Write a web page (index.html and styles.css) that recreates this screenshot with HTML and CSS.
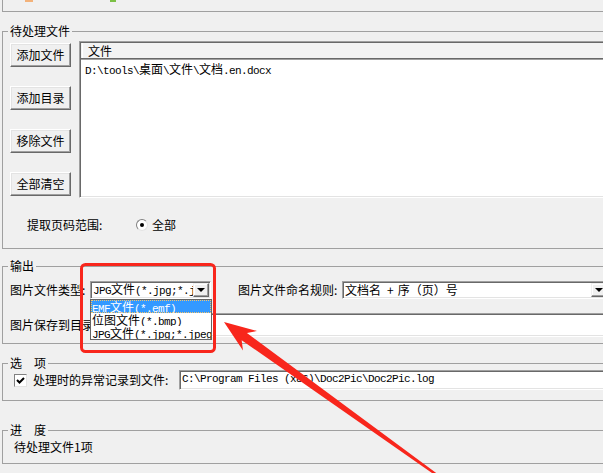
FILE: index.html
```html
<!DOCTYPE html>
<html lang="zh-CN">
<head>
    <meta charset="UTF-8">
    <meta name="viewport" content="width=device-width, initial-scale=1.0">
    <title>Doc2Pic</title>
    <link rel="stylesheet" href="styles.css">
</head>
<body>
    <div class="window">
        <div class="toolbar">
            <span class="tool-icon orange"></span>
            <span class="tool-icon green"></span>
        </div>

        <fieldset class="group group-files">
            <legend>待处理文件</legend>
            <div class="files-row">
                <div class="file-buttons">
                    <button class="btn">添加文件</button>
                    <button class="btn">添加目录</button>
                    <button class="btn">移除文件</button>
                    <button class="btn">全部清空</button>
                </div>
                <div class="file-list sunken">
                    <div class="list-header"><span class="header-cell">文件</span></div>
                    <div class="list-item mono">D:\tools\<span class="cjk">桌面</span>\<span class="cjk">文件</span>\<span class="cjk">文档</span>.en.docx</div>
                </div>
            </div>
            <div class="range-row">
                <span class="range-label">提取页码范围:</span>
                <span class="radio"><span class="radio-dot"></span></span>
                <span class="radio-text">全部</span>
            </div>
        </fieldset>

        <fieldset class="group group-output">
            <legend>输出</legend>
            <div class="output-row">
                <span class="label label-type">图片文件类型:</span>
                <div class="combo combo-type sunken">
                    <span class="combo-text mono">JPG<span class="cjk">文件</span>(*.jpg;*.jpeg)</span>
                    <span class="combo-btn"><span class="caret"></span></span>
                    <ul class="dropdown">
                        <li class="selected mono">EMF<span class="cjk">文件</span>(*.emf)</li>
                        <li class="mono"><span class="cjk">位图文件</span>(*.bmp)</li>
                        <li class="mono">JPG<span class="cjk">文件</span>(*.jpg;*.jpeg)</li>
                    </ul>
                </div>
                <span class="label label-name">图片文件命名规则:</span>
                <div class="combo combo-name sunken">
                    <span class="combo-text">文档名<span class="plus">+</span>序（页）号</span>
                    <span class="combo-btn"><span class="caret"></span></span>
                </div>
            </div>
            <div class="output-row dir-row">
                <span class="label label-dir">图片保存到目录:</span>
                <div class="textbox dir-box sunken"></div>
            </div>
        </fieldset>

        <fieldset class="group group-options">
            <legend>选<span class="legend-gap"></span>项</legend>
            <div class="options-row">
                <span class="checkbox">
                    <svg width="11" height="11" viewBox="0 0 11 11"><path d="M2 5 L4.5 7.5 L9 3" fill="none" stroke="#000" stroke-width="2"/></svg>
                </span>
                <span class="check-label">处理时的异常记录到文件:</span>
                <div class="textbox log-box sunken mono">C:\Program Files (x86)\Doc2Pic\Doc2Pic.log</div>
            </div>
        </fieldset>

        <fieldset class="group group-progress">
            <legend>进<span class="legend-gap"></span>度</legend>
            <div class="progress-text">待处理文件1项</div>
        </fieldset>

        <!-- annotation drawn on top of the screenshot -->
        <svg class="annotation" width="603" height="473" viewBox="0 0 603 473">
            <rect x="81.5" y="264.5" width="133" height="87" rx="4" fill="none" stroke="#f8261c" stroke-width="3"/>
            <polygon transform="translate(224 322) rotate(35.7)" fill="#f8261c"
                points="0,0 32,-12 25,-4.5 275,-1 275,1 25,4.5 32,12"/>
        </svg>
    </div>
</body>
</html>
```

FILE: styles.css
```css
* {
    box-sizing: border-box;
    margin: 0;
    padding: 0;
}

body {
    background: #f0f0f0;
    font-family: "Noto Sans CJK SC", sans-serif;
    font-size: 12px;
    line-height: 14px;
    color: #000;
    overflow: hidden;
}

.window {
    position: relative;
    width: 603px;
    height: 473px;
    overflow: hidden;
}

.mono {
    font-family: "Liberation Mono", "Noto Sans CJK SC", monospace;
    font-size: 11px;
    letter-spacing: -0.6px;
}

.cjk {
    font-family: "Noto Sans CJK SC", sans-serif;
    font-size: 12px;
    letter-spacing: 0;
}

.toolbar {
    display: flex;
    height: 12px;
    margin-left: 2px;
    border-left: 1px solid #a0a0a0;
    border-bottom: 1px solid #a0a0a0;
}

.tool-icon {
    height: 2px;
}

.tool-icon.orange {
    width: 8px;
    margin-left: 22px;
    background: #f3b27a;
}

.tool-icon.green {
    width: 6px;
    margin-left: 77px;
    background: #7cc046;
}

/* group boxes */
.group {
    border: 1px solid #a0a0a0;
    margin-left: 2px;
    margin-right: -20px;
    padding: 0 0 0 7px;
}

.group legend {
    margin-left: -2px;
    padding: 0 2px;
    line-height: 14px;
}

.legend-gap {
    display: inline-block;
    width: 12px;
}

.group-files {
    margin-top: 12px;
    height: 225px;
    padding-top: 3px;
}

.group-output {
    margin-top: 10px;
    height: 85px;
    padding-top: 8px;
}

.group-options {
    margin-top: 12px;
    height: 45px;
}

.group-progress {
    margin-top: 22px;
    height: 41px;
    padding-top: 3px;
}

.sunken {
    background: #fff;
    border: 1px solid;
    border-color: #a0a0a0 #fff #fff #a0a0a0;
    box-shadow: inset 1px 1px #696969, inset -1px -1px #e3e3e3;
}

/* file list */
.files-row {
    display: flex;
    gap: 8px;
    height: 157px;
}

.file-buttons {
    display: flex;
    flex-direction: column;
    justify-content: space-between;
    width: 61px;
    padding: 2px 0;
}

.btn {
    height: 24px;
    font: inherit;
    background: #f0f0f0;
    border: 1px solid;
    border-color: #fff #696969 #696969 #fff;
    box-shadow: inset -1px -1px #a0a0a0, inset 1px 1px #e3e3e3;
}

.file-list {
    flex: 1;
    padding: 1px 0 0 1px;
}

.list-header {
    height: 16px;
    background: #f3f3f3;
    border-bottom: 1px solid #696969;
    box-shadow: 0 1px #a0a0a0;
}

.header-cell {
    display: block;
    height: 15px;
    margin-left: 1px;
    padding-left: 5px;
    border-left: 1px solid #fff;
    line-height: 15px;
}

.list-item {
    margin-top: 2px;
    padding-left: 4px;
    line-height: 15px;
}

.range-row {
    display: flex;
    align-items: center;
    margin-top: 20px;
    padding-left: 17px;
}

.range-label {
    width: 109px;
}

.radio {
    display: flex;
    align-items: center;
    justify-content: center;
    width: 12px;
    height: 12px;
    border-radius: 50%;
    border: 1px solid;
    border-color: #808080 #e3e3e3 #e3e3e3 #808080;
    background: #fff;
}

.radio-dot {
    width: 4px;
    height: 4px;
    border-radius: 50%;
    background: #000;
}

.radio-text {
    margin-left: 4px;
}

/* output */
.output-row {
    display: flex;
    align-items: center;
}

.label-type {
    width: 80px;
}

.label-name {
    width: 104px;
    margin-left: 27px;
}

.label-dir {
    width: 90px;
}

.combo {
    position: relative;
    display: flex;
    align-items: center;
    height: 18px;
}

.combo-type {
    width: 121px;
}

.combo-name {
    width: 267px;
}

.combo-text {
    flex: 1;
    padding-left: 2px;
    white-space: nowrap;
    overflow: hidden;
    line-height: 16px;
}

.plus {
    margin: 0 4px 0 6px;
}

.combo-btn {
    display: flex;
    align-items: center;
    justify-content: center;
    width: 16px;
    height: 14px;
    margin-right: 1px;
    background: #f0f0f0;
    border: 1px solid;
    border-color: #f0f0f0 #696969 #696969 #f0f0f0;
    box-shadow: inset -1px -1px #a0a0a0, inset 1px 1px #fff;
}

.caret {
    width: 0;
    height: 0;
    border-left: 4px solid transparent;
    border-right: 4px solid transparent;
    border-top: 4px solid #000;
}

.dropdown {
    position: absolute;
    top: 17px;
    left: -1px;
    z-index: 5;
    width: 122px;
    list-style: none;
    background: #fff;
    border: 1px solid #646464;
}

.dropdown li {
    height: 13px;
    padding-left: 1px;
    line-height: 13px;
    white-space: nowrap;
    overflow: hidden;
}

.dropdown li.selected {
    background: #3399ff;
    color: #fff;
    outline: 1px dotted #f5c46a;
    outline-offset: -1px;
}

.dir-row {
    margin-top: 14px;
}

.textbox {
    flex: 1;
    white-space: nowrap;
    overflow: hidden;
}

.dir-box {
    height: 24px;
}

/* options */
.options-row {
    display: flex;
    align-items: center;
    height: 20px;
}

.checkbox {
    display: flex;
    align-items: center;
    justify-content: center;
    width: 13px;
    height: 13px;
    margin-left: 4px;
    background: #fff;
    border: 1px solid;
    border-color: #808080 #e3e3e3 #e3e3e3 #808080;
}

.check-label {
    width: 146px;
    margin-left: 6px;
}

.log-box {
    height: 20px;
    padding-left: 2px;
    line-height: 17px;
}

.progress-text {
    margin-left: 4px;
}

.annotation {
    position: absolute;
    top: 0;
    left: 0;
    pointer-events: none;
}
```
